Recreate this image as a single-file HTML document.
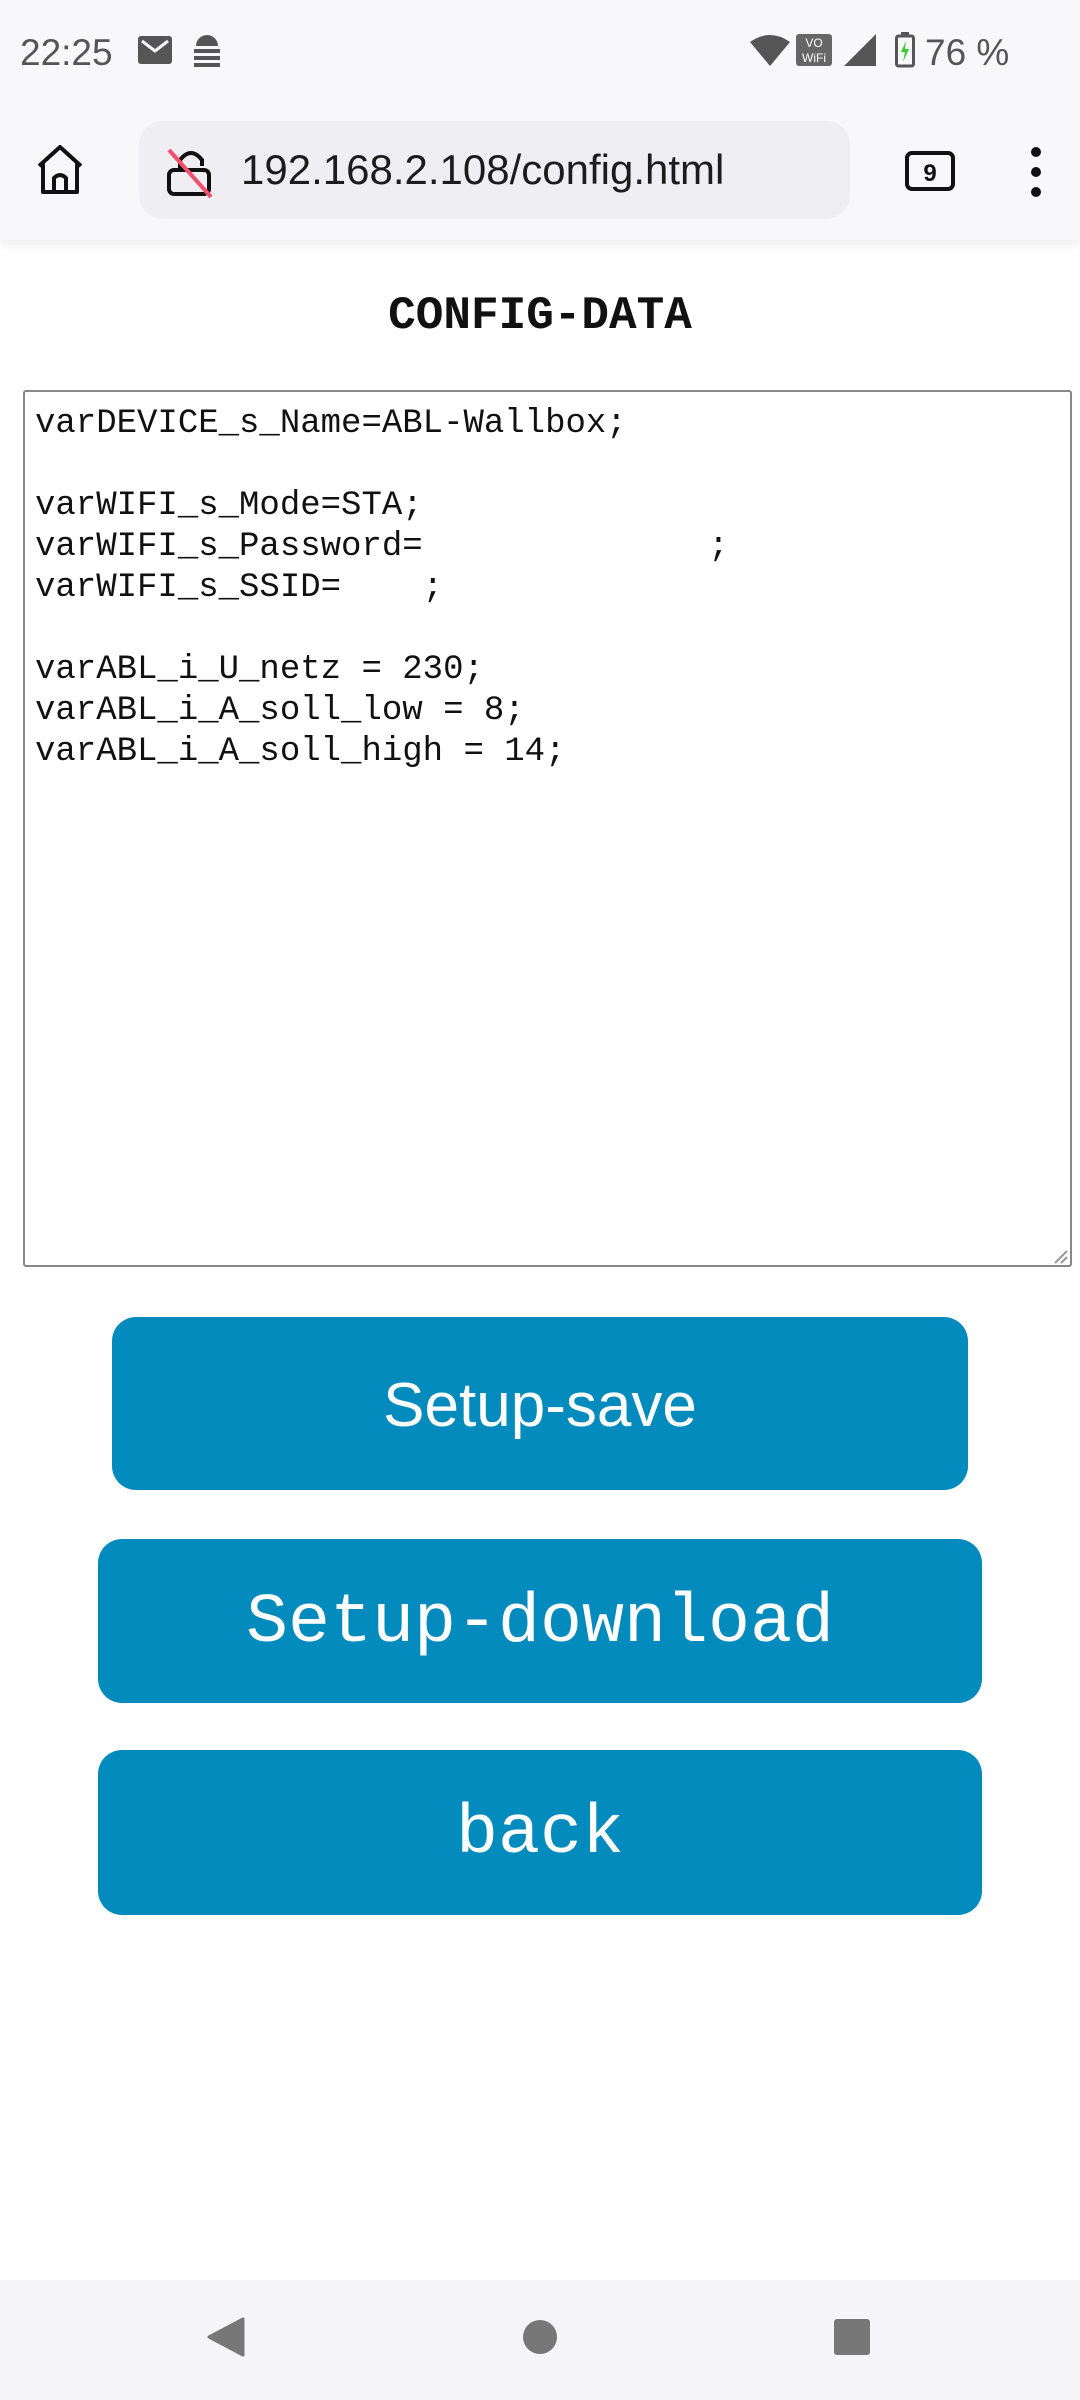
<!DOCTYPE html>
<html><head><meta charset="utf-8"><style>
*{margin:0;padding:0;box-sizing:border-box}
body{width:1080px;height:2400px;background:#fff;position:relative;overflow:hidden;font-family:"Liberation Sans",sans-serif}
.abs{position:absolute}
#top{left:0;top:0;width:1080px;height:240px;background:#f8f8fa;box-shadow:0 4px 10px rgba(0,0,0,0.08)}
.st{font-size:37px;color:#555;top:32px}
#url{left:139px;top:121px;width:711px;height:98px;background:#efeff3;border-radius:24px}
#urltext{left:241px;top:146px;font-size:42px;color:#1c1c1c}
h1{position:absolute;left:0;width:1080px;top:290px;text-align:center;font-family:"Liberation Mono",monospace;font-size:46px;font-weight:bold;color:#111}
#ta{left:23px;top:390px;width:1049px;height:877px;border:2px solid #888;border-radius:3px;font-family:"Liberation Mono",monospace;font-size:34px;line-height:41px;color:#111;padding:12px 0 0 10px;white-space:pre}
.btn{position:absolute;background:#038bbd;color:#fff;border-radius:24px;display:flex;align-items:center;justify-content:center;padding-top:4px}
#nav{left:0;top:2280px;width:1080px;height:120px;background:#f5f5f7}
</style></head><body>
<div id="top" class="abs"></div>
<div class="abs st" style="left:20px">22:25</div>
<svg class="abs" style="left:138px;top:36px" width="34" height="28"><rect width="34" height="28" rx="3" fill="#555"/><path d="M4 5 L17 15 L30 5" stroke="#f8f8fa" stroke-width="3" fill="none"/></svg>
<svg class="abs" style="left:192px;top:32px" width="30" height="36"><path d="M4 14 A11 11 0 0 1 26 14 Z" fill="#555"/><rect x="2" y="17" width="26" height="4" fill="#555"/><rect x="2" y="24" width="26" height="4" fill="#555"/><rect x="2" y="31" width="26" height="4" fill="#555"/></svg>
<svg class="abs" style="left:750px;top:34px" width="40" height="32"><path d="M0 8 Q20 -6 40 8 L20 32 Z" fill="#555"/></svg>
<svg class="abs" style="left:796px;top:34px" width="36" height="32"><rect width="36" height="32" rx="3" fill="#666"/><text x="18" y="13" font-size="12" fill="#fff" text-anchor="middle" font-family="Liberation Sans">VO</text><text x="18" y="28" font-size="12" fill="#fff" text-anchor="middle" font-family="Liberation Sans">WiFi</text></svg>
<svg class="abs" style="left:844px;top:34px" width="32" height="32"><path d="M32 0 L32 32 L0 32 Z" fill="#555"/></svg>
<svg class="abs" style="left:895px;top:32px" width="20" height="36"><rect x="6" y="0" width="8" height="4" fill="#555"/><rect x="1.5" y="4" width="17" height="30" rx="2" fill="none" stroke="#555" stroke-width="3"/><path d="M11 9 L6 20 L10 20 L8 30 L14 17 L10 17 Z" fill="#3c3"/></svg>
<div class="abs st" style="left:925px">76 %</div>
<svg class="abs" style="left:34px;top:144px" width="52" height="52"><path d="M5 22 L26 3 L47 22 M9 19 V48 H43 V19 M20 48 V34 Q26 28 32 34 V48" fill="none" stroke="#111" stroke-width="4" stroke-linejoin="round"/></svg>
<div id="url" class="abs"></div>
<svg class="abs" style="left:166px;top:146px" width="52" height="52"><path d="M14 24 V14 Q25 0 36 14 V20" fill="none" stroke="#111" stroke-width="4"/><rect x="3" y="24" width="40" height="24" rx="5" fill="none" stroke="#111" stroke-width="4"/><path d="M3 4 L45 51" stroke="#f0506e" stroke-width="4"/></svg>
<div id="urltext" class="abs">192.168.2.108/config.html</div>
<svg class="abs" style="left:905px;top:151px" width="50" height="40"><rect x="2" y="2" width="46" height="36" rx="5" fill="none" stroke="#111" stroke-width="4"/><text x="25" y="30" font-size="24" font-weight="bold" text-anchor="middle" font-family="Liberation Sans" fill="#111">9</text></svg>
<svg class="abs" style="left:1030px;top:146px" width="12" height="52"><circle cx="6" cy="6" r="5" fill="#111"/><circle cx="6" cy="26" r="5" fill="#111"/><circle cx="6" cy="46" r="5" fill="#111"/></svg>
<h1>CONFIG-DATA</h1>
<div id="ta" class="abs">varDEVICE_s_Name=ABL-Wallbox;

varWIFI_s_Mode=STA;
varWIFI_s_Password=              ;
varWIFI_s_SSID=    ;

varABL_i_U_netz = 230;
varABL_i_A_soll_low = 8;
varABL_i_A_soll_high = 14;</div>
<svg class="abs" style="left:1052px;top:1248px" width="16" height="16"><path d="M15 3 L3 15 M15 9 L9 15" stroke="#999" stroke-width="2"/></svg>
<div class="btn" style="left:112px;top:1317px;width:856px;height:173px;font-size:62px">Setup-save</div>
<div class="btn" style="left:98px;top:1539px;width:884px;height:164px;font-family:'Liberation Mono',monospace;font-size:70px">Setup-download</div>
<div class="btn" style="left:98px;top:1750px;width:884px;height:165px;font-family:'Liberation Mono',monospace;font-size:70px">back</div>
<div id="nav" class="abs"></div>
<svg class="abs" style="left:205px;top:2317px" width="40" height="40"><path d="M38 2 L38 38 L4 20 Z" fill="#777" stroke="#777" stroke-width="3" stroke-linejoin="round"/></svg>
<svg class="abs" style="left:522px;top:2319px" width="36" height="36"><circle cx="18" cy="18" r="17" fill="#777"/></svg>
<svg class="abs" style="left:834px;top:2319px" width="36" height="36"><rect width="36" height="36" rx="3" fill="#777"/></svg>
</body></html>
